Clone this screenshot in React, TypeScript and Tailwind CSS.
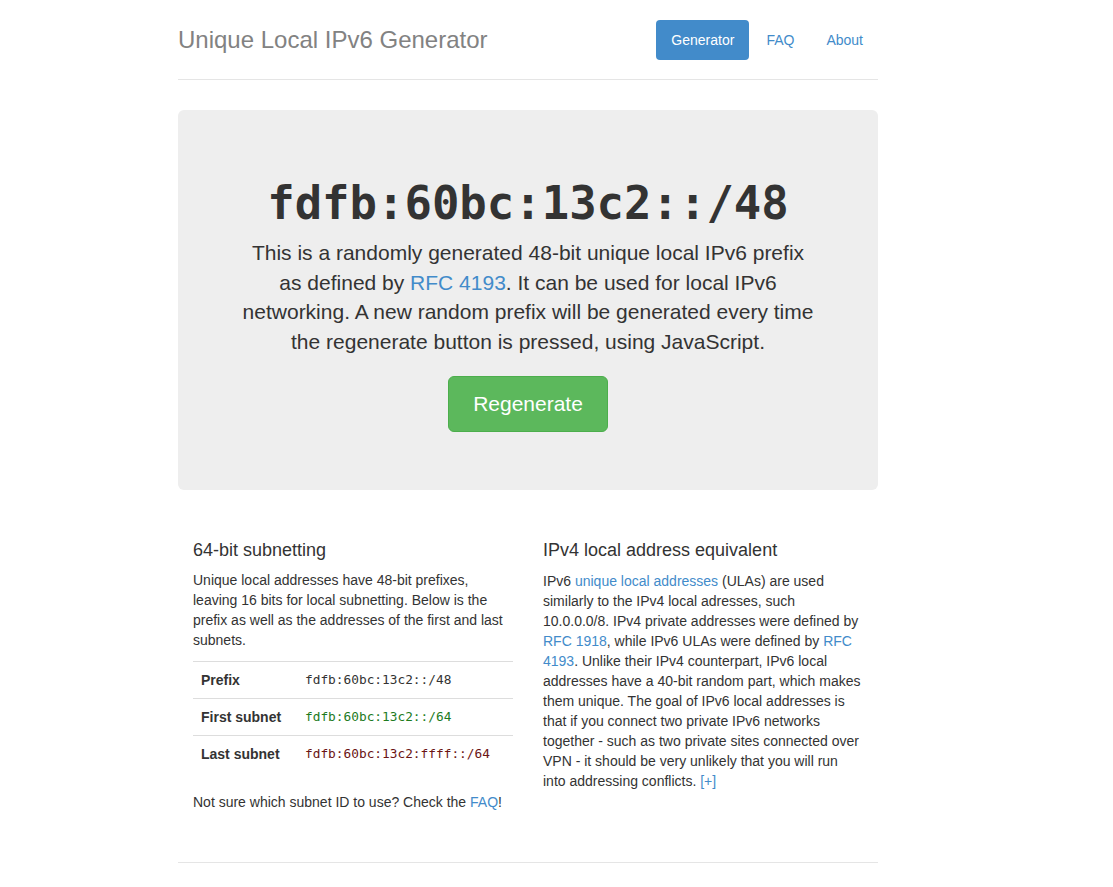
const sans = "font-['Liberation_Sans',Arial,sans-serif]";
const mono = "font-['DejaVu_Sans_Mono','Liberation_Mono',monospace]";

const prefix = "fdfb:60bc:13c2::/48";

const rows = [
    { label: "Prefix", value: prefix, color: "text-[#333333]" },
    { label: "First subnet", value: "fdfb:60bc:13c2::/64", color: "text-[#1e7b1e]" },
    { label: "Last subnet", value: "fdfb:60bc:13c2:ffff::/64", color: "text-[#6b1414]" },
];

const Header = () => (
    <div className="flex items-start justify-between border-b border-[#e5e5e5] pt-5 pb-[19px]">
        <h3 className="text-[24px] leading-[40px] text-[#828282]">Unique Local IPv6 Generator</h3>
        <ul className="flex gap-[2px] text-[14px] leading-5">
            <li className="rounded-[4px] bg-[#428bca] px-[15px] py-[10px] text-white">Generator</li>
            <li className="px-[15px] py-[10px] text-[#428bca]">FAQ</li>
            <li className="px-[15px] py-[10px] text-[#428bca]">About</li>
        </ul>
    </div>
);

const Jumbotron = () => (
    <div className="mt-[30px] flex flex-col items-center rounded-[6px] bg-[#eeeeee] px-[60px] pt-[69px] pb-[58px] text-center">
        <h1 className={`${mono} text-[45.6px] leading-[50px] font-bold text-[#333333]`}>{prefix}</h1>
        <p className="mt-[9px] text-[21px] leading-[29.5px] text-[#333333]">
            This is a randomly generated 48-bit unique local IPv6 prefix as defined by{" "}
            <a className="text-[#428bca]">RFC 4193</a>. It can be used for local IPv6 networking. A new random
            prefix will be generated every time the regenerate button is pressed, using JavaScript.
        </p>
        <button className="mt-[20px] h-[56px] w-[160px] rounded-[6px] border border-[#4cae4c] bg-[#5cb85c] text-[21px] text-white">
            Regenerate
        </button>
    </div>
);

const Subnetting = () => (
    <div className="px-[15px] pb-[10px]">
        <h4 className="mt-[10px] text-[18px] leading-[20px] text-[#333333]">64-bit subnetting</h4>
        <p className="mt-[10px]">
            Unique local addresses have 48-bit prefixes, leaving 16 bits for local subnetting. Below is the prefix as
            well as the addresses of the first and last subnets.
        </p>
        <table className="mt-[11px] w-full border-collapse">
            <tbody>
                {rows.map((r) => (
                    <tr key={r.label} className="border-t border-[#dddddd]">
                        <td className="w-[104px] p-2 font-bold text-[#333333]">{r.label}</td>
                        <td className={`${mono} ${r.color} p-2 text-[12.8px]`}>{r.value}</td>
                    </tr>
                ))}
            </tbody>
        </table>
        <p className="mt-[20px]">
            Not sure which subnet ID to use? Check the <a className="text-[#428bca]">FAQ</a>!
        </p>
    </div>
);

const Equivalent = () => (
    <div className="px-[15px]">
        <h4 className="mt-[10px] text-[18px] leading-[20px] text-[#333333]">IPv4 local address equivalent</h4>
        <p className="mt-[11px]">
            IPv6 <a className="text-[#428bca]">unique local addresses</a> (ULAs) are used similarly to the IPv4 local
            adresses, such 10.0.0.0/8. IPv4 private addresses were defined by{" "}
            <a className="text-[#428bca]">RFC 1918</a>, while IPv6 ULAs were defined by{" "}
            <a className="text-[#428bca]">RFC 4193</a>. Unlike their IPv4 counterpart, IPv6 local addresses have a
            40-bit random part, which makes them unique. The goal of IPv6 local addresses is that if you connect two
            private IPv6 networks together - such as two private sites connected over VPN - it should be very unlikely
            that you will run into addressing conflicts. <a className="text-[#428bca]">[+]</a>
        </p>
    </div>
);

export default function App() {
    return (
        <div className={`${sans} min-h-screen bg-white text-[14px] leading-5 text-[#333333]`}>
            <div className="ml-[178px] w-[700px]">
                <Header />
                <Jumbotron />
                <div className="mt-[40px] grid grid-cols-2">
                    <Subnetting />
                    <Equivalent />
                </div>
                <div className="mt-[40px] h-[60px] border-t border-[#e5e5e5]" />
            </div>
        </div>
    );
}
